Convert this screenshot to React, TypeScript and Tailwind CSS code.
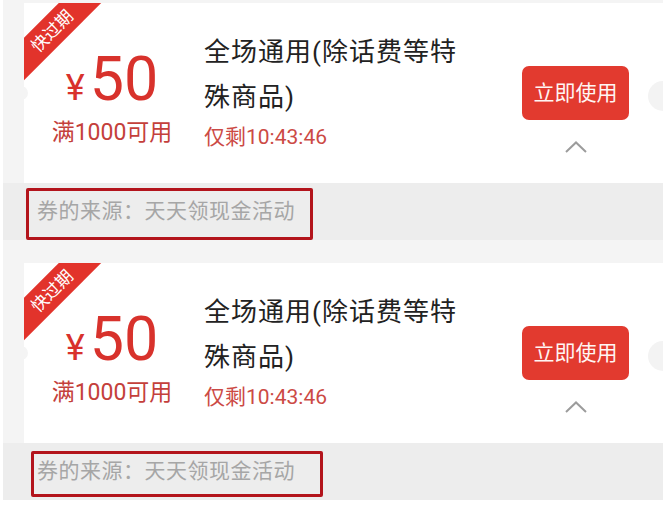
import React from "react";

const FONT = { fontFamily: 'Roboto, "Noto Sans CJK SC", sans-serif' };

function Coupon({ box }: { box: string }) {
  return (
    <div>
      <div className="pl-[21px]">
        <div className="relative h-[180px] bg-white overflow-hidden flex">
          {/* expiring ribbon */}
          <div className="absolute left-[-32px] top-[13px] w-[120px] h-[30px] bg-[#e2332b] -rotate-45 flex items-center justify-center text-white text-[17px] leading-none">
            快过期
          </div>
          <div className="absolute right-[-15px] top-[78px] w-[30px] h-[30px] rounded-full bg-[#f3f3f3]" />
          <div className="absolute left-[-10px] top-[83px] w-[14px] h-[14px] rounded-full bg-[#f4f4f4]" />

          <div className="w-[176px] flex flex-col items-center pt-[46px]">
            <div className="flex items-baseline text-[#d8322c] h-[60px] leading-none">
              <span className="text-[36px] mr-[5px]">¥</span>
              <span className="text-[61px]">50</span>
            </div>
            <div className="mt-[9px] text-[23px] leading-[30px] text-[#c4403b]">满1000可用</div>
          </div>

          <div className="ml-[4px] pt-[27px]">
            <div className="w-[262px] text-[26px] leading-[45px] tracking-[1px] text-[#222]">
              全场通用(除话费等特殊商品)
            </div>
            <div className="mt-[3px] text-[21px] leading-[28px] text-[#cc4a45]">仅剩10:43:46</div>
          </div>

          <div className="flex-1" />

          <div className="pr-[34px] pt-[63px] flex flex-col items-center">
            <button className="w-[107px] h-[54px] rounded-[7px] bg-[#e23a2f] text-[#fff5f3] text-[21px] leading-none">
              立即使用
            </button>
            <svg className="mt-[21px]" width="22" height="12" viewBox="0 0 22 12">
              <polyline points="1,11 11,1.5 21,11" fill="none" stroke="#9c9c9c" strokeWidth="2" />
            </svg>
          </div>
        </div>
      </div>
      <div className="relative h-[57px] bg-[#ededed] flex items-center pl-[34px] text-[21px] tracking-[0.5px] text-[#a6a6a6]">
        券的来源：天天领现金活动
        <div className={box} />
      </div>
    </div>
  );
}

export default function App() {
  return (
    <div className="w-[663px] border-l-[3px] border-white bg-[#f4f4f4] pt-[3px]" style={FONT}>
      <Coupon box="absolute left-[23px] top-[5px] w-[287px] h-[52px] border-[3px] border-[#b3141c] rounded-[2px]" />
      <div className="h-[23px]" />
      <Coupon box="absolute left-[28px] top-[8px] w-[292px] h-[46px] border-[3px] border-[#b3141c] rounded-[2px]" />
    </div>
  );
}
